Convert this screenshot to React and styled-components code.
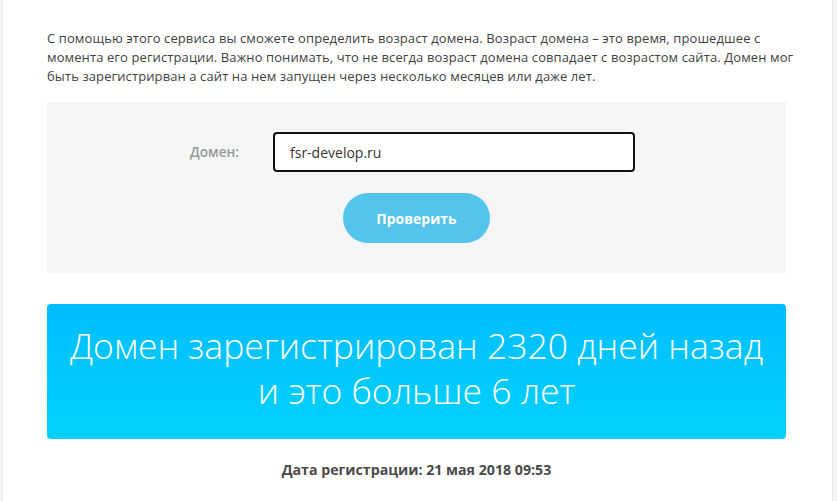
import React from "react";
import styled, { createGlobalStyle } from "styled-components";

const GlobalStyle = createGlobalStyle`
  html, body {
    margin: 0;
    padding: 0;
    background: #f4f5f7;
  }
  * {
    box-sizing: border-box;
  }
`;

const Page = styled.div`
  width: 831px;
  min-height: 501px;
  margin-left: 2px;
  background: #ffffff;
  border-left: 1px solid #e9eaec;
  border-right: 1px solid #e9eaec;
  padding: 29px 46px 20px 44px;
  font-family: "Open Sans", "Liberation Sans", sans-serif;
  color: #444444;
`;

const Intro = styled.p`
  margin: 0 0 16px;
  font-size: 13px;
  line-height: 19px;
  letter-spacing: 0.1px;
  white-space: nowrap;
  color: #3f3f3f;
`;

const FormBox = styled.div`
  background: #f3f5f6;
  height: 171px;
  padding-top: 30px;
  display: flex;
  flex-direction: column;
  align-items: center;
`;

const Row = styled.div`
  display: flex;
  align-items: center;
  gap: 33px;
  margin-left: -8px;
`;

const Label = styled.label`
  font-size: 13.5px;
  font-weight: 600;
  color: #999999;
  width: 50px;
`;

const Input = styled.input`
  width: 362px;
  height: 40px;
  border: 2px solid #111111;
  border-radius: 4px;
  padding: 0 15px;
  font-family: inherit;
  font-size: 14px;
  color: #333333;
  background: #ffffff;
  outline: none;
`;

const Button = styled.button`
  margin-top: 21px;
  width: 147px;
  height: 50px;
  border: none;
  border-radius: 25px;
  background: #54c4ec;
  color: #ffffff;
  font-family: inherit;
  font-size: 14px;
  font-weight: 700;
  cursor: pointer;
`;

const Result = styled.div`
  margin-top: 31px;
  height: 135px;
  border-radius: 4px;
  background: linear-gradient(180deg, #00bdfd 0%, #00d2fd 100%);
  display: flex;
  align-items: center;
  justify-content: center;
  text-align: center;
  color: #ffffff;
  font-size: 35.5px;
  font-weight: 300;
  line-height: 45px;
  padding-bottom: 7px;
`;

const DateLine = styled.div`
  margin-top: 21px;
  text-align: center;
  font-size: 14.2px;
  font-weight: 700;
  color: #4a4a4a;
`;

export default function App() {
  return (
    <>
      <GlobalStyle />
      <Page>
        <Intro>
          С помощью этого сервиса вы сможете определить возраст домена. Возраст домена – это время, прошедшее с
          <br />
          момента его регистрации. Важно понимать, что не всегда возраст домена совпадает с возрастом сайта. Домен мог
          <br />
          быть зарегистрирван а сайт на нем запущен через несколько месяцев или даже лет.
        </Intro>
        <FormBox>
          <Row>
            <Label htmlFor="domain">Домен:</Label>
            <Input id="domain" defaultValue="fsr-develop.ru" />
          </Row>
          <Button>Проверить</Button>
        </FormBox>
        <Result>
          Домен зарегистрирован 2320 дней назад
          <br />
          и это больше 6 лет
        </Result>
        <DateLine>Дата регистрации: 21 мая 2018 09:53</DateLine>
      </Page>
    </>
  );
}
